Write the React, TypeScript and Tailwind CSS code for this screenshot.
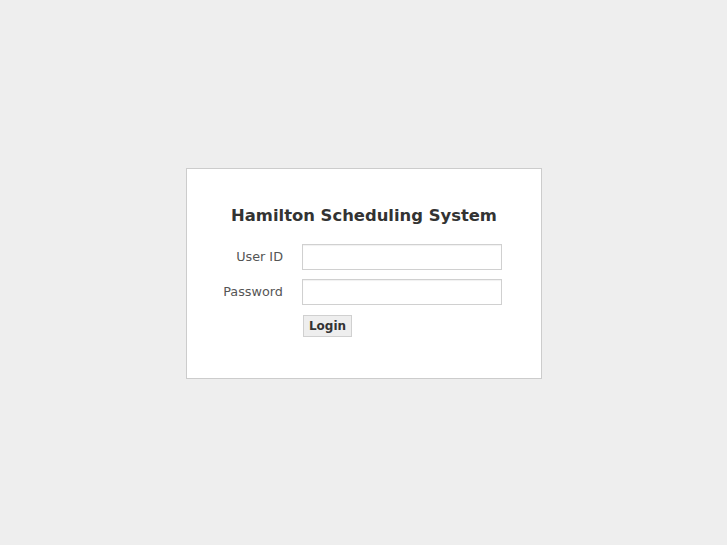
export default function App() {
  return (
    <div
      className="flex h-screen w-full items-center justify-center bg-[#eeeeee] pl-px pt-[2px]"
      style={{ fontFamily: '"DejaVu Sans", Verdana, sans-serif' }}
    >
      <div className="h-[211px] w-[356px] border border-[#cccccc] bg-white">
        <h1 className="pt-[37px] text-center text-[16.4px] font-bold leading-[20px] text-[#333333]">
          Hamilton Scheduling System
        </h1>
        <form
          className="mt-[18px] grid grid-cols-[96px_200px] items-center gap-x-[19px] gap-y-[9px]"
          onSubmit={(e) => e.preventDefault()}
        >
          <label className="text-right text-[12.8px] text-[#555555]">User ID</label>
          <input
            type="text"
            className="h-[26px] w-[200px] border border-[#d0d0d0] bg-white px-1 text-[13px] shadow-[inset_0_1px_1px_rgba(0,0,0,0.06)] outline-none"
          />
          <label className="text-right text-[12.8px] text-[#555555]">Password</label>
          <input
            type="password"
            className="h-[26px] w-[200px] border border-[#d0d0d0] bg-white px-1 text-[13px] shadow-[inset_0_1px_1px_rgba(0,0,0,0.06)] outline-none"
          />
          <div />
          <div className="flex pl-px pt-px">
            <button
              type="submit"
              className="h-[22px] w-[49px] border border-[#d0d0d0] bg-[#eeeeee] text-[12px] font-bold leading-none text-[#333333]"
            >
              Login
            </button>
          </div>
        </form>
      </div>
    </div>
  );
}
